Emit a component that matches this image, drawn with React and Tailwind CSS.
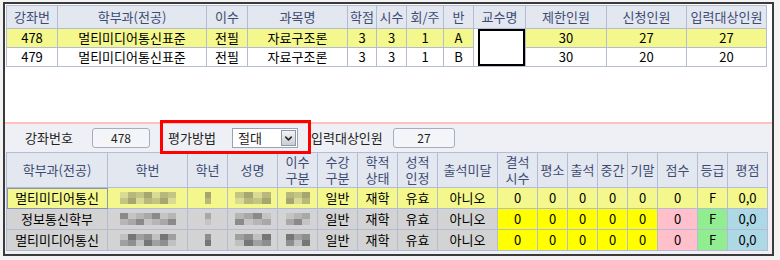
import React from 'react';
import { ChevronDown } from 'lucide-react';

const font = { fontFamily: '"Noto Sans CJK KR", "Noto Sans", sans-serif' };

const topCols = 'grid-cols-[51px_149px_41px_100px_29px_30px_37px_30px_52px_81px_80px_80px]';
const botCols = 'grid-cols-[101px_80px_40px_50px_40px_40px_40px_40px_60px_40px_30px_30px_30px_30px_40px_30px_40px]';

const topHeaders = ['강좌번', '학부과(전공)', '이수', '과목명', '학점', '시수', '회/주', '반', '교수명', '제한인원', '신청인원', '입력대상인원'];

const topRows = [
  { bg: 'bg-[#f3f78c]', cells: ['478', '멀티미디어통신표준', '전필', '자료구조론', '3', '3', '1', 'A', null, '30', '27', '27'] },
  { bg: 'bg-white', cells: ['479', '멀티미디어통신표준', '전필', '자료구조론', '3', '3', '1', 'B', null, '30', '20', '20'] },
];

const botHeaders = [
  ['학부과(전공)'], ['학번'], ['학년'], ['성명'], ['이수', '구분'], ['수강', '구분'], ['학적', '상태'],
  ['성적', '인정'], ['출석미달'], ['결석', '시수'], ['평소'], ['출석'], ['중간'], ['기말'], ['점수'], ['등급'], ['평점'],
];

const botRows = [
  { dept: '멀티미디어통신', base: 'bg-[#f3f78c]', score: 'bg-[#f3f78c]', pink: 'bg-[#f3f78c]', green: 'bg-[#f3f78c]', blue: 'bg-[#f3f78c]', blur: ['#dada95', '#a6a670', '#c4c483', '#b8b87a'] },
  { dept: '정보통신학부', base: 'bg-[#d3d3d3]', score: 'bg-[#ffff00]', pink: 'bg-[#ffc0cb]', green: 'bg-[#90ee90]', blue: 'bg-[#add8e6]', blur: ['#c4c4c4', '#8a8a8a', '#a8a8a8', '#b6b6b6'] },
  { dept: '멀티미디어통신', base: 'bg-[#d3d3d3]', score: 'bg-[#ffff00]', pink: 'bg-[#ffc0cb]', green: 'bg-[#90ee90]', blue: 'bg-[#add8e6]', blur: ['#a0a0a0', '#767676', '#c0c0c0', '#8e8e8e'] },
];

const cell = 'border-r border-b border-[#b4bcd4] flex items-center justify-center';

// pixelated smudge standing in for masked personal data
const Mosaic = ({ blocks, colors, w = 'w-[7px]', seed = 0 }) => (
  <div className="flex flex-col blur-[0.5px]">
    {[0, 1].map((row) => (
      <div key={row} className="flex">
        {Array.from({ length: blocks }).map((_, i) => (
          <div
            key={i}
            className={`${w} h-[6px]`}
            style={{ backgroundColor: colors[(i * 3 + row * 2 + seed) % 4] }}
          />
        ))}
      </div>
    ))}
  </div>
);

const ReadBox = ({ value, w }) => (
  <div className={`${w} h-[20px] rounded-[3px] border border-[#a6adbd] bg-[#f4f5f8] flex items-center justify-center text-[12px] text-[#222]`}>
    {value}
  </div>
);

const TopTable = () => (
  <div className={`grid ${topCols} border-l border-t border-[#b4bcd4] w-max`}>
    {topHeaders.map((h) => (
      <div key={h} className={`${cell} h-[23px] bg-[#e3e7f0] text-[#3d4b73] text-[13px]`}>{h}</div>
    ))}
    {topRows.map((row, r) =>
      row.cells.map((c, i) => {
        if (i === 8) {
          if (r === 1) return null;
          return (
            <div key={i} className={`${cell} row-span-2 bg-white items-stretch justify-end pl-[4px]`}>
              <div className="flex-1 border-2 border-black bg-white" />
            </div>
          );
        }
        return (
          <div key={i} className={`${cell} ${row.bg} h-[19px] text-[13px] text-black`}>{c}</div>
        );
      })
    )}
  </div>
);

const BottomTable = () => (
  <div className={`grid ${botCols} border-l border-t border-[#b4bcd4] w-max`}>
    {botHeaders.map((h, i) => (
      <div key={i} className={`${cell} flex-col h-[35px] bg-[#e3e7f0] text-[#3d4b73] text-[13px] leading-[16px]`}>
        {h.map((t) => <span key={t}>{t}</span>)}
      </div>
    ))}
    {botRows.map((row, r) => (
      <React.Fragment key={r}>
        <div className={`${cell} ${row.base} h-[21px] text-[13px] ${r === 0 ? 'outline outline-1 outline-[#8c96b4] -outline-offset-1' : ''}`}>{row.dept}</div>
        <div className={`${cell} ${row.base} h-[21px]`}><Mosaic blocks={7} colors={row.blur} w="w-[8px]" seed={r} /></div>
        <div className={`${cell} ${row.base} h-[21px]`}><Mosaic blocks={1} colors={row.blur} w="w-[6px]" seed={r + 1} /></div>
        <div className={`${cell} ${row.base} h-[21px]`}><Mosaic blocks={4} colors={row.blur} w="w-[9px]" seed={r + 2} /></div>
        <div className={`${cell} ${row.base} h-[21px]`}><Mosaic blocks={3} colors={row.blur} w="w-[8px]" seed={r + 3} /></div>
        <div className={`${cell} ${row.base} h-[21px] text-[13px]`}>일반</div>
        <div className={`${cell} ${row.base} h-[21px] text-[13px]`}>재학</div>
        <div className={`${cell} ${row.base} h-[21px] text-[13px]`}>유효</div>
        <div className={`${cell} ${row.base} h-[21px] text-[13px]`}>아니오</div>
        {['0', '0', '0', '0', '0'].map((v, i) => (
          <div key={i} className={`${cell} ${row.score} h-[21px] text-[13px]`}>{v}</div>
        ))}
        <div className={`${cell} ${row.pink} h-[21px] text-[13px]`}>0</div>
        <div className={`${cell} ${row.green} h-[21px] text-[13px]`}>F</div>
        <div className={`${cell} ${row.blue} h-[21px] text-[13px]`}>0,0</div>
      </React.Fragment>
    ))}
  </div>
);

export default function App() {
  return (
    <div className="w-[780px] h-[260px] bg-[#f3f3f3] pl-[3px] pt-[2px]" style={font}>
      <div className="relative w-[771px] h-[254px] border-2 border-[#3a3a3a] bg-[#eef0f5] flex flex-col">
        <div className="h-[118px] bg-white pl-px pt-px">
          <TopTable />
        </div>
        <div className="h-[2px] bg-[#ffc0c0]" />
        <div className="h-[28px] flex items-center text-[13px] text-[#222]">
          <span className="ml-[20px] w-[67px]">강좌번호</span>
          <ReadBox value="478" w="w-[58px]" />
          <span className="ml-[18px] w-[64px]">평가방법</span>
          <div className="h-[20px] w-[66px] border border-[#9aa3b5] bg-white flex items-center">
            <span className="flex-1 pl-[5px] text-[13px]">절대</span>
            <div className="w-[15px] h-[16px] mr-px border border-[#8f96a6] bg-[linear-gradient(#f4f4f4,#c8ccd4)] flex items-center justify-center">
              <ChevronDown size={11} strokeWidth={3.5} color="#2a2a2a" />
            </div>
          </div>
          <span className="ml-[13px] w-[82px]">입력대상인원</span>
          <ReadBox value="27" w="w-[62px]" />
        </div>
        <div className="pl-px">
          <BottomTable />
        </div>
        <div className="absolute left-[155px] top-[116px] w-[151px] h-[34px] border-[3px] border-[#ff0000]" />
      </div>
    </div>
  );
}
